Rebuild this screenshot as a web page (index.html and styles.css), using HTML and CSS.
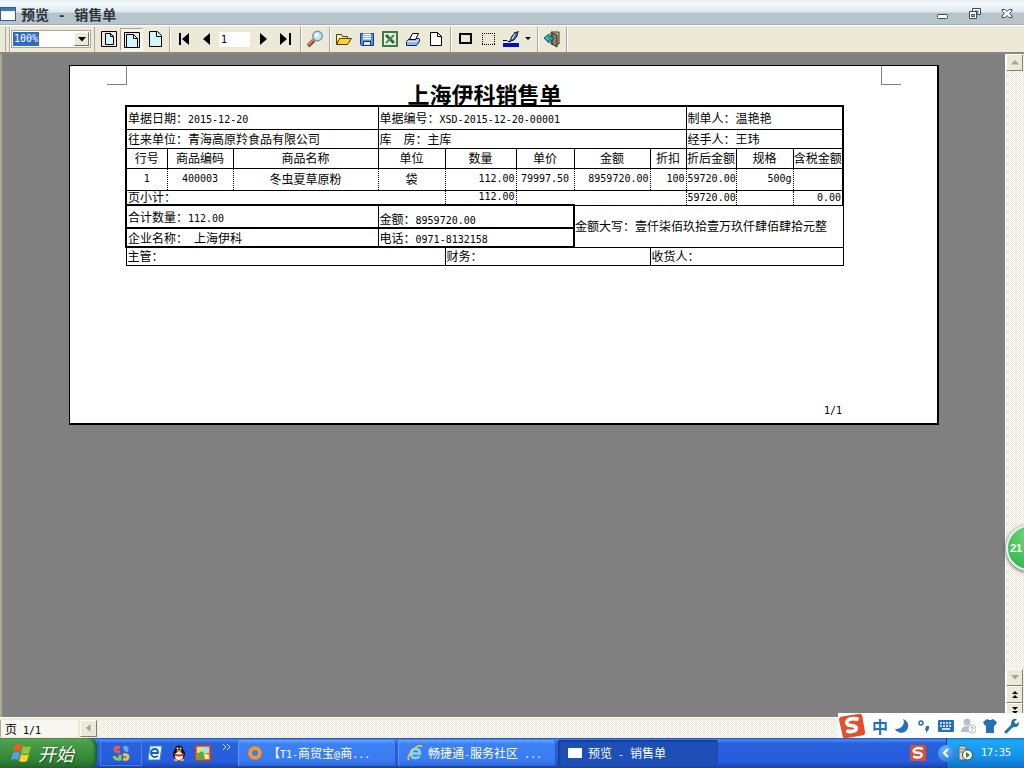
FILE: index.html
```html
<!DOCTYPE html>
<html lang="zh-CN">
<head>
<meta charset="utf-8">
<title>预览 - 销售单</title>
<link rel="stylesheet" href="styles.css">
</head>
<body>
<div class="screen">
  <header class="titlebar">
    <svg class="app-icon" width="16" height="14" viewBox="0 0 16 14"><rect x=".5" y=".5" width="15" height="13" fill="#fff" stroke="#2c5f9c"/><rect x="1" y="1" width="14" height="3" fill="#3a7cc4"/></svg>
    <h1 class="title">预览<span class="title-dash"> - </span>销售单</h1>
    <div class="window-buttons">
      <button class="window-button" aria-label="最小化"><svg width="14" height="14"><rect x="1.500" y="7.500" width="10" height="4" rx="1" fill="#fff" stroke="#3c4a54"/></svg></button>
      <button class="window-button" aria-label="还原"><svg width="14" height="14"><path d="M4.500 1.500h8v6h-8z" fill="#fff" stroke="#3c4a54"/><path d="M7 4h3v2H7z" fill="#fff" stroke="#3c4a54"/><path d="M1.500 4.500h7v7h-7z" fill="#fff" stroke="#3c4a54"/><path d="M3.500 7.500h3v2h-3z" fill="#b6c6cc" stroke="#3c4a54"/></svg></button>
      <button class="window-button" aria-label="关闭"><svg width="14" height="14"><path d="M2 2.500h3l2 2 2-2h3v1.500L9.500 6.500 12 9v1.500H9l-2-2-2 2H2V9l2.500-2.500L2 4z" fill="#fff" stroke="#3c4a54"/></svg></button>
    </div>
  </header>

  <div class="toolbar">
    <div class="tool-group grip"></div>
    <div class="combo">
      <input class="combo-text" aria-label="缩放" value="100%">
      <button class="combo-arrow" aria-label="选择缩放"><svg width="8" height="5"><path d="M0 0h8L4 4.500z"/></svg></button>
    </div>
    <div class="tool-group">
      <button class="tool" aria-label="整页"><svg width="18" height="18"><path d="M1.500 1.500h15v15h-15z" fill="#ece9d8" stroke="#000"/><path d="M5.500 3.500h5l3 3v8h-8z" fill="#d4f4fc" stroke="#000"/><path d="M10.500 3.500v3h3" fill="none" stroke="#000"/></svg></button>
      <button class="tool pressed" aria-label="页宽"><svg width="18" height="18"><path d="M1.500 2.500h15v15h-15z" fill="#ece9d8" stroke="#000"/><path d="M3.500 4.500h7l4 4v9h-11z" fill="#d4f4fc" stroke="#000"/><path d="M10.500 4.500v4h4" fill="none" stroke="#000"/></svg></button>
      <button class="tool" aria-label="实际大小"><svg width="18" height="18"><path d="M3.500 1.500h8l4 4v11h-12z" fill="#d4f4fc" stroke="#000"/><path d="M10.500 1.500v5h5" fill="none" stroke="#000"/></svg></button>
    </div>
    <div class="tool-group">
      <button class="tool" aria-label="首页"><svg width="18" height="18"><path d="M4 3h2v12H4zM14 3v12L7 9z"/></svg></button>
      <button class="tool" aria-label="上一页"><svg width="18" height="18"><path d="M12 3v12L5 9z"/></svg></button>
      <input class="page-input" aria-label="页码" value="1">
      <button class="tool" aria-label="下一页"><svg width="18" height="18"><path d="M6 3v12l7-6z"/></svg></button>
      <button class="tool" aria-label="末页"><svg width="18" height="18"><path d="M3 3v12l7-6zM12 3h2v12h-2z"/></svg></button>
    </div>
    <div class="tool-group">
      <button class="tool" aria-label="查找"><svg width="18" height="18"><path d="M2 16l6-6" stroke="#7d4a3a" stroke-width="4"/><path d="M2 15l6-6" stroke="#c98a68" stroke-width="2"/><circle cx="11.500" cy="6" r="4.700" fill="#bfe4fb" stroke="#7f93ad" stroke-width="1.500"/><circle cx="10.500" cy="5" r="2" fill="#f2fbff"/></svg></button>
    </div>
    <div class="tool-group">
      <button class="tool" aria-label="打开"><svg width="18" height="18"><path d="M1.500 14.500v-10h5l1 2h5v3" fill="#fff3a0" stroke="#4d3d00"/><path d="M1.500 14.500l3-6h12l-4 6z" fill="#ffd42e" stroke="#4d3d00"/></svg></button>
      <button class="tool" aria-label="保存"><svg width="18" height="18"><path d="M2.500 3.500h13v12h-12l-1-1z" fill="#5b8ee0" stroke="#123a7c"/><path d="M5 3.500h8v6H5z" fill="#fff"/><path d="M5 5.500h8M5 7.500h8" stroke="#9db6d8"/><path d="M5.500 11.500h7v4h-7z" fill="#dfe8f4" stroke="#123a7c"/></svg></button>
      <button class="tool" aria-label="导出 Excel"><svg width="18" height="18"><path d="M2 2h14v14H2z" fill="#e8f2e4" stroke="#3f7a42" stroke-width="2"/><path d="M5 5l8 8" stroke="#2f6e34" stroke-width="3"/><path d="M13 5l-8 8" stroke="#4b8f4c" stroke-width="2"/></svg></button>
      <button class="tool" aria-label="打印"><svg width="18" height="18"><path d="M2.500 11.500l3-3h10v3l-3 4h-10z" fill="#8fb4ee" stroke="#18243c"/><path d="M3 11.500h9.500l3-3" fill="none" stroke="#e6f0ff"/><path d="M5.500 9.500l3-6h6l-3 6z" fill="#fff" stroke="#000"/></svg></button>
      <button class="tool" aria-label="新建"><svg width="18" height="18"><path d="M3.500 2.500h7l4 4v9h-11z" fill="#fff" stroke="#000"/><path d="M10.500 2.500v4h4" fill="none" stroke="#000"/></svg></button>
    </div>
    <div class="tool-group">
      <button class="tool" aria-label="边框"><svg width="18" height="18"><path d="M4 4h11v9H4z" fill="none" stroke="#000" stroke-width="2"/></svg></button>
      <button class="tool" aria-label="虚线框"><svg width="18" height="18"><path d="M3 3.500h13M3 14.500h13M3.500 3v12M15.500 3v12" fill="none" stroke="#000" stroke-dasharray="1 1"/></svg></button>
      <button class="tool" aria-label="线条颜色"><svg width="18" height="18"><path d="M1 13h16v4H1z" fill="#0010c8"/><path d="M1 10.500h4l1 1h3" fill="none" stroke="#000"/><path d="M8 11l2-5 2-2 1-2 2 1 1-2-1 5-3 4z" fill="#456cb4" stroke="#101c40"/><path d="M10 9l3-5" stroke="#fff"/></svg></button>
      <button class="tool narrow" aria-label="更多颜色"><svg width="6" height="4"><path d="M0 0h6L3 3z"/></svg></button>
    </div>
    <div class="tool-group">
      <button class="tool" aria-label="退出"><svg width="18" height="18"><path d="M8 2h8v12H8z" fill="#c9bda0" stroke="#3d3728"/><path d="M9 3l5 2v12l-5-3z" fill="#8b7d5e" stroke="#2c271b"/><path d="M1 8l5-4v3h4v3H6v3z" fill="#35b4c4" stroke="#0d5763"/></svg></button>
    </div>
  </div>

  <main class="workspace">
    <section class="canvas">
      <article class="paper">
        <div class="marks"><i class="mark mark-left"></i><i class="mark mark-right"></i></div>
        <div class="sheet">
          <h2 class="report-title">上海伊科销售单</h2>
          <table class="report">
            <colgroup><col class="c41"><col class="c66"><col class="c145"><col class="c67"><col class="c71"><col class="c58"><col class="c76"><col class="c36"><col class="c50"><col class="c57"><col class="c50"></colgroup>
            <tbody class="framed">
              <tr class="h23"><td colspan="3">单据日期：<span class="n">2015-12-20</span></td><td colspan="5">单据编号：<span class="n">XSD-2015-12-20-00001</span></td><td colspan="3">制单人：温艳艳</td></tr>
              <tr class="h19"><td colspan="3">往来单位：青海高原羚食品有限公司</td><td colspan="5">库　房：主库</td><td colspan="3">经手人：王玮</td></tr>
              <tr class="h20"><th>行号</th><th>商品编码</th><th>商品名称</th><th>单位</th><th>数量</th><th>单价</th><th>金额</th><th>折扣</th><th>折后金额</th><th>规格</th><th>含税金额</th></tr>
              <tr class="h22 dotted"><td class="center n">1</td><td class="center n">400003</td><td class="center">冬虫夏草原粉</td><td class="center">袋</td><td class="right n">112.00</td><td class="center n">79997.50</td><td class="right n">8959720.00</td><td class="right n">100</td><td class="right n">59720.00</td><td class="right n">500g</td><td></td></tr>
              <tr class="h15 dotted"><td colspan="4">页小计：</td><td class="right n">112.00</td><td colspan="3"></td><td class="right n">59720.00</td><td></td><td class="right n">0.00</td></tr>
            </tbody>
            <tbody>
              <tr class="h23"><td colspan="3" class="thick thick-left">合计数量：<span class="n">112.00</span></td><td colspan="3" class="thick thick-right low">金额：<span class="n">8959720.00</span></td><td colspan="5" rowspan="2" class="flush">金额大写：壹仟柒佰玖拾壹万玖仟肆佰肆拾元整</td></tr>
              <tr class="h19"><td colspan="3" class="thick thick-left">企业名称：<span class="n"> </span>上海伊科</td><td colspan="3" class="thick thick-right">电话：<span class="n">0971-8132158</span></td></tr>
              <tr class="h18"><td colspan="4">主管：</td><td colspan="3">财务：</td><td colspan="4">收货人：</td></tr>
            </tbody>
          </table>
          <p class="page-number n">1/1</p>
        </div>
      </article>
    </section>
    <aside class="scroll-v">
      <button class="scroll-button" aria-label="向上滚动"><svg width="8" height="5"><path d="M0 4.500h8L4 0z" fill="#a8a592"/></svg></button>
      <button class="scroll-button push" aria-label="向下滚动"><svg width="8" height="5"><path d="M0 0h8L4 4.500z" fill="#a8a592"/></svg></button>
      <button class="scroll-button" aria-label="前一页"><svg width="8" height="10"><path d="M1 4h6L4 1zM1 8h6L4 5z"/></svg></button>
      <button class="scroll-button short" aria-label="后一页"><svg width="8" height="10"><path d="M1 2h6L4 5zM1 6h6L4 9z"/></svg></button>
      <div class="badge">21</div>
    </aside>
  </main>

  <div class="statusbar">
    <div class="status-page">页<span class="n"> 1/1</span></div>
    <button class="scroll-button" aria-label="向左滚动"><svg width="5" height="8"><path d="M4.500 0v8L0 4z" fill="#a8a592"/></svg></button>
    <div class="scroll-h"></div>
    <div class="ime">
      <svg width="28" height="28" viewBox="0 0 30 28"><path d="M3 4l20-3q2 0 3 2l3 18q0 2-2 3L8 27q-3 0-3-2L1 7q0-2 2-3z" fill="#e2502c"/><path d="M22 7q-6-2-10 0-5 3-1 6l6 1q5 2 1 5-4 2-9 0" fill="none" stroke="#fff" stroke-width="4"/></svg>
      <span class="ime-mode">中</span>
      <svg width="16" height="16"><path d="M9 1a7 7 0 1 1-8 10a8 7 0 0 0 8-10z" fill="#2471b5"/></svg>
      <svg width="16" height="16"><circle cx="5" cy="5" r="2" fill="none" stroke="#2471b5" stroke-width="1.500"/><path d="M10 8h3v3l-3 4v-3h-1z" fill="#2471b5"/></svg>
      <svg width="16" height="16"><rect y="2" width="16" height="12" rx="1" fill="#2471b5"/><path d="M2 5h12M2 8h12" stroke="#fff" stroke-width="1.500" stroke-dasharray="2 1"/><path d="M4 11h8" stroke="#fff" stroke-width="1.500"/></svg>
      <svg width="16" height="16"><circle cx="7" cy="4" r="3.500" fill="#b4bfce"/><path d="M1 14q0-6 6-6t6 6z" fill="#b4bfce"/><circle cx="12" cy="11" r="4" fill="#fff" stroke="#b4bfce"/><path d="M10.500 10q1.500-2 3 0l-1.500 1.500v2" fill="none" stroke="#9aa7b8"/></svg>
      <svg width="16" height="16"><path d="M5 1q3 2 6 0l4 3-2 4-1-1v8H4V7L3 8 1 4z" fill="#2471b5"/></svg>
      <svg width="16" height="16"><path d="M2 14l7-7" stroke="#2471b5" stroke-width="3" stroke-linecap="round"/><path d="M13 1q-6-1-6 5 0 4 4 3 4 0 4-5l-3 2-2-2z" fill="#2471b5"/></svg>
    </div>
  </div>

  <footer class="taskbar">
    <button class="start"><svg width="22" height="20" viewBox="0 0 22 20"><path d="M4 2q4-2 7 0L9 9Q6 7 2 9z" fill="#f0572a"/><path d="M12 3q4 2 8 0l-2 7q-4 2-8 0z" fill="#8ccc3c"/><path d="M2 10q4-2 7 0l-2 7q-3-2-7 0z" fill="#5a9cf4"/><path d="M10 11q4 2 8 0l-2 7q-4 2-8 0z" fill="#ffd02c"/></svg><span>开始</span></button>
    <button class="band" aria-label="语言"><svg width="18" height="18"><path d="M8 4q-5-2-5 1t5 3" fill="none" stroke="#f05a3c" stroke-width="3"/><path d="M11 2q0 6 5 6 2-5-2-6z" fill="#68a8f0"/><path d="M2 12q1 4 6 3v-4" fill="none" stroke="#8ed03c" stroke-width="3"/><path d="M11 15q5 1 5-2t-5-2" fill="none" stroke="#f8c030" stroke-width="3"/></svg></button>
    <nav class="quick">
      <button class="quick-button" aria-label="浏览器"><svg width="16" height="16"><path d="M3 1h12l-2 14H1z" fill="#eef8ff" stroke="#3d84c0"/><path d="M5 8h6q0-4-3-4-4 0-4 4 1 6 7 3" fill="none" stroke="#1d5fa8" stroke-width="1.800"/></svg></button>
      <button class="quick-button" aria-label="QQ"><svg width="16" height="16"><ellipse cx="8" cy="9" rx="6" ry="6" fill="#111"/><circle cx="8" cy="4.500" r="4" fill="#111"/><ellipse cx="8" cy="11" rx="4" ry="4" fill="#fff"/><path d="M3 8q5 3 10 0v2q-5 3-10 0z" fill="#e02418"/><ellipse cx="8" cy="6" rx="2.500" ry="1" fill="#f8a818"/><circle cx="6.500" cy="3.500" r="1" fill="#fff"/><circle cx="9.500" cy="3.500" r="1" fill="#fff"/><path d="M3 15h4M9 15h4" stroke="#f8a818" stroke-width="2"/></svg></button>
      <button class="quick-button" aria-label="图片"><svg width="16" height="16"><rect x=".5" y=".5" width="15" height="15" fill="#e8682c" stroke="#c8401c"/><path d="M2 2h6v6H2z" fill="#c8ec9c"/><path d="M8 2h6v6H8z" fill="#a8dcf8"/><path d="M2 9l5-3 7 8H2z" fill="#58b038"/><path d="M9 8l5 2v4h-4z" fill="#fff0a0"/></svg></button>
      <button class="more" aria-label="更多"><svg width="9" height="6"><path d="M1 0l3 3-3 3M5 0l3 3-3 3" fill="none" stroke="#cfe0ff"/></svg></button>
    </nav>
    <div class="tasks">
      <button class="task"><svg width="16" height="16"><circle cx="8" cy="8" r="5" fill="none" stroke="#f49a38" stroke-width="4"/><circle cx="8" cy="8" r="6.500" fill="none" stroke="#d86a18" stroke-dasharray="3 2"/></svg><span>【<span class="n">T1-</span>商贸宝<span class="n">@</span>商<span class="n">...</span></span></button>
      <button class="task"><svg width="16" height="16"><path d="M4 8.500h9q0-4.500-4.500-4.500T4 9q0 4 4.500 4 2.500 0 4-2" fill="none" stroke="#8ad4fc" stroke-width="2.500"/><path d="M2 15Q-1 12 6 5t9-3" fill="none" stroke="#f4cc48" stroke-width="1.500"/></svg><span>畅捷通<span class="n">-</span>服务社区<span class="n"> ...</span></span></button>
      <button class="task active"><svg width="16" height="16"><path d="M1 3h14v10H1z" fill="#fff"/></svg><span>预览<span class="n"> - </span>销售单</span></button>
    </div>
    <svg class="tray-ime" width="16" height="16"><rect width="16" height="16" rx="1" fill="#e04c30"/><path d="M13 4Q8 2 5 4T5 7.500l5 .5q3 1.500 1 3.500t-8 0" fill="none" stroke="#fff" stroke-width="2.400"/></svg>
    <div class="tray">
      <button class="tray-toggle" aria-label="展开托盘"><svg width="8" height="10"><path d="M6 1L2 5l4 4" fill="none" stroke="#fff" stroke-width="2"/></svg></button>
      <svg width="16" height="16"><path d="M2 1h7v14H2z" fill="#d8d4c8" stroke="#605c50"/><path d="M3 4h5M3 7h5" stroke="#807868"/><circle cx="10.500" cy="10" r="5" fill="#fff" stroke="#384838"/><path d="M9 7v6l4-3z" fill="#149a20"/></svg>
      <time class="clock n">17:35</time>
    </div>
  </footer>
</div>
</body>
</html>
```
FILE: styles.css
```css
* { box-sizing: border-box; }
body {
  margin: 0;
  font: 12px/12px "Noto Sans CJK SC", sans-serif;
  color: #000;
  overflow: hidden;
}
button, input {
  margin: 0;
  padding: 0;
  border: 0;
  background: none;
  font: inherit;
  color: inherit;
}
button {
  display: flex;
  align-items: center;
  justify-content: center;
}
svg { display: block; flex: none; }
.n { font-family: "DejaVu Sans Mono", monospace; font-size: 10px; }
span.n { line-height: 0; white-space: pre; }

.screen {
  display: flex;
  flex-direction: column;
  height: 100vh;
  min-height: 560px;
}

/* title bar */
.titlebar {
  display: flex;
  align-items: center;
  flex: none;
  height: 25px;
  padding: 2px 10px 0 0;
  gap: 5px;
  background: linear-gradient(#e2eef2 0, #f4fafb 3px, #dfe9ed 12px, #b5c5cb 13px, #b5c5cb 24px, #8e9a9e 25px);
}
.title {
  flex: 1;
  margin: 0;
  font-size: 14px;
  line-height: 14px;
  font-weight: 700;
  color: #2b3238;
}
.title-dash {
  font-family: "Liberation Mono", monospace;
  line-height: 0;
  white-space: pre;
}
.window-buttons { display: flex; gap: 18px; }

/* toolbar */
.toolbar {
  display: flex;
  align-items: center;
  flex: none;
  height: 27px;
  padding-left: 5px;
  border-top: 1px solid #fff;
  background: #ece9d8;
}
.tool-group {
  display: flex;
  align-items: center;
  height: 25px;
  padding: 0 3px 0 2px;
  border-right: 1px solid #aca899;
  box-shadow: 1px 0 #fff;
}
.grip {
  width: 5px;
  padding: 0;
  border-left: 1px solid #aca899;
}
.combo {
  display: flex;
  width: 80px;
  height: 18px;
  margin: 0 3px 0 1px;
  padding: 1px;
  justify-content: space-between;
  background: #fff;
  border: 1px solid #aca899;
}
.combo-text {
  width: 26px;
  height: 14px;
  padding-left: 1px;
  font: 10px/14px "DejaVu Sans Mono", monospace;
  color: #fff;
  background: #316ac5;
}
.combo-arrow {
  width: 15px;
  background: #ece9d8;
  border: 1px solid;
  border-color: #fff #716f64 #716f64 #fff;
}
.combo + .tool-group { border-left: 1px solid #aca899; }
.tool { width: 23px; height: 23px; }
.pressed {
  border: 1px solid;
  border-color: #aca899 #fff #fff #aca899;
  background: #f4f2e8;
}
.narrow { width: 12px; }
.page-input {
  width: 31px;
  height: 15px;
  margin: 0 1px;
  padding-left: 2px;
  background: #fff;
  font: 10px/15px "DejaVu Sans Mono", monospace;
}

/* preview area */
.workspace {
  display: flex;
  flex: 1;
  min-height: 0;
  border-top: 2px solid #8b897c;
}
.canvas {
  flex: 1;
  min-width: 0;
  padding: 11px 66px 0 67px;
  background: #808080;
  border-left: 2px solid #aca899;
}
.paper {
  display: flex;
  flex-direction: column;
  min-height: 360px;
  background: #fff;
  border: solid #000;
  border-width: 1px 2px 2px 1px;
}
.marks {
  display: flex;
  justify-content: space-between;
  padding: 0 36px 0 37px;
}
.mark {
  width: 20px;
  height: 19px;
  border-bottom: 1px solid #808080;
}
.mark-left { border-right: 1px solid #808080; }
.mark-right { border-left: 1px solid #808080; }
.sheet {
  display: flex;
  flex-direction: column;
  flex: 1;
  padding: 0 93px 6px 55px;
}
.report-title {
  margin: 0;
  padding-bottom: 4px;
  font-size: 22px;
  line-height: 16px;
  font-weight: 700;
  text-align: center;
}
.report {
  width: 100%;
  table-layout: fixed;
  border-collapse: collapse;
}
.report td, .report th {
  padding: 0 1px;
  border: 1px solid #000;
  font-weight: 400;
  text-align: left;
  white-space: nowrap;
}
.report th, .report .center { padding: 0; text-align: center; }
.report .right { text-align: right; }
.report .flush { padding: 0; }
.report .framed { border: 2px solid #000; border-bottom-width: 1px; }
.report .dotted td { border-left-style: dotted; border-right-style: dotted; }
.report .dotted td:first-child { border-left: 2px solid #000; }
.report .dotted td:last-child { border-right: 2px solid #000; }
.report .thick { border-top-width: 2px; border-bottom-width: 2px; }
.report .thick-left { border-left-width: 2px; }
.report .thick-right { border-right-width: 2px; }
.report .low { padding-top: 5px; }
.c41 { width: 41px; }
.c66 { width: 66px; }
.c145 { width: 145px; }
.c67 { width: 67px; }
.c71 { width: 71px; }
.c58 { width: 58px; }
.c76 { width: 76px; }
.c36 { width: 36px; }
.c50 { width: 50px; }
.c57 { width: 57px; }
.h23 { height: 23px; }
.h22 { height: 22px; }
.h20 { height: 20px; }
.h19 { height: 19px; }
.h18 { height: 18px; }
.h15 { height: 15px; }
.page-number {
  margin: auto 2px 0 0;
  text-align: right;
}

/* scroll bars */
.scroll-v, .scroll-h {
  background: repeating-conic-gradient(#fff 0 25%, #ece9d8 0 50%) 0 0 / 2px 2px;
}
.scroll-v {
  position: relative;
  display: flex;
  flex-direction: column;
  flex: none;
  width: 19px;
  padding-right: 2px;
  border-left: 1px solid #fff;
}
.scroll-button {
  flex: none;
  width: 17px;
  height: 17px;
  background: #ece9d8;
  border: 1px solid;
  border-color: #fff #808075 #808075 #fff;
}
.push { margin-top: auto; }
.short { height: 14px; overflow: hidden; }
.badge {
  position: absolute;
  top: 471px;
  left: 0;
  width: 46px;
  height: 46px;
  padding-left: 2px;
  border: 2px solid #e4f0e8;
  border-radius: 50%;
  background: radial-gradient(circle at 50% 20%, #6fd67c, #2fae48);
  box-shadow: 0 1px 4px #444;
  color: #fff;
  font: 700 11px/42px "Liberation Sans", sans-serif;
}

/* status row */
.statusbar {
  position: relative;
  display: flex;
  align-items: center;
  flex: none;
  height: 21px;
  padding: 1px 0;
  background: #ece9d8;
  border-top: 1px solid #fff;
}
.status-page {
  width: 78px;
  height: 17px;
  margin-right: 2px;
  padding: 0 4px;
  line-height: 17px;
  background: #f8f7f2;
  border-left: 1px solid #aca899;
}
.scroll-h { flex: 1; height: 17px; margin-left: 1px; }
.ime {
  position: absolute;
  right: 0;
  bottom: 0;
  display: flex;
  align-items: center;
  gap: 6px;
  height: 25px;
  padding-right: 4px;
  background: #fff;
}
.ime-mode {
  width: 16px;
  color: #2471b5;
  font-size: 16px;
  line-height: 16px;
  font-weight: 700;
}

/* taskbar */
.taskbar {
  display: flex;
  align-items: center;
  flex: none;
  height: 30px;
  color: #fff;
  background: linear-gradient(#1f4fb8 0, #4a8cf5 2px, #2a62dc 5px, #245cdc 24px, #1941a5 30px);
}
.start {
  width: 97px;
  height: 30px;
  gap: 5px;
  padding-right: 12px;
  border-radius: 0 8px 8px 0;
  background: linear-gradient(#6fb06c 0, #4a9e48 4px, #34893a 20px, #236b28 30px);
  box-shadow: inset -2px 0 3px #1d5a22;
  font-size: 18px;
  line-height: 20px;
  font-style: italic;
  text-shadow: 1px 1px 1px #1b4a1d;
}
.band {
  width: 42px;
  height: 25px;
  margin-left: 3px;
  border: 1px solid #4c80ea;
}
.quick {
  display: flex;
  align-items: center;
  gap: 8px;
  padding: 0 7px 0 5px;
}
.more { padding: 0 0 12px 3px; }
.tasks { display: flex; flex: 1; gap: 2px; min-width: 0; }
.task {
  flex: 0 1 158px;
  height: 26px;
  gap: 5px;
  padding-left: 9px;
  justify-content: flex-start;
  border-radius: 2px;
  white-space: nowrap;
  background: linear-gradient(#6aa4fb, #3c81f3 4px, #3a7cf0 20px, #2f68d4);
  box-shadow: inset 1px 0 #5e97f8, inset -1px 0 #2a5bc4;
}
.active {
  flex-basis: 160px;
  background: #1e4fb6;
  box-shadow: inset 1px 1px 2px #12367f;
}
.tray-ime { margin-right: 20px; }
.tray {
  display: flex;
  align-items: center;
  height: 30px;
  padding-right: 13px;
  gap: 2px;
  background: linear-gradient(#0f7ad8, #1fa8f6 3px, #128fe6 20px, #0f6fc4);
  border-left: 1px solid #0b3c8c;
}
.tray-toggle {
  width: 17px;
  height: 17px;
  margin-left: -9px;
  border-radius: 50%;
  background: radial-gradient(circle at 40% 30%, #6cb8fa, #1a6cd8);
}
.clock { margin-left: 6px; }
```
